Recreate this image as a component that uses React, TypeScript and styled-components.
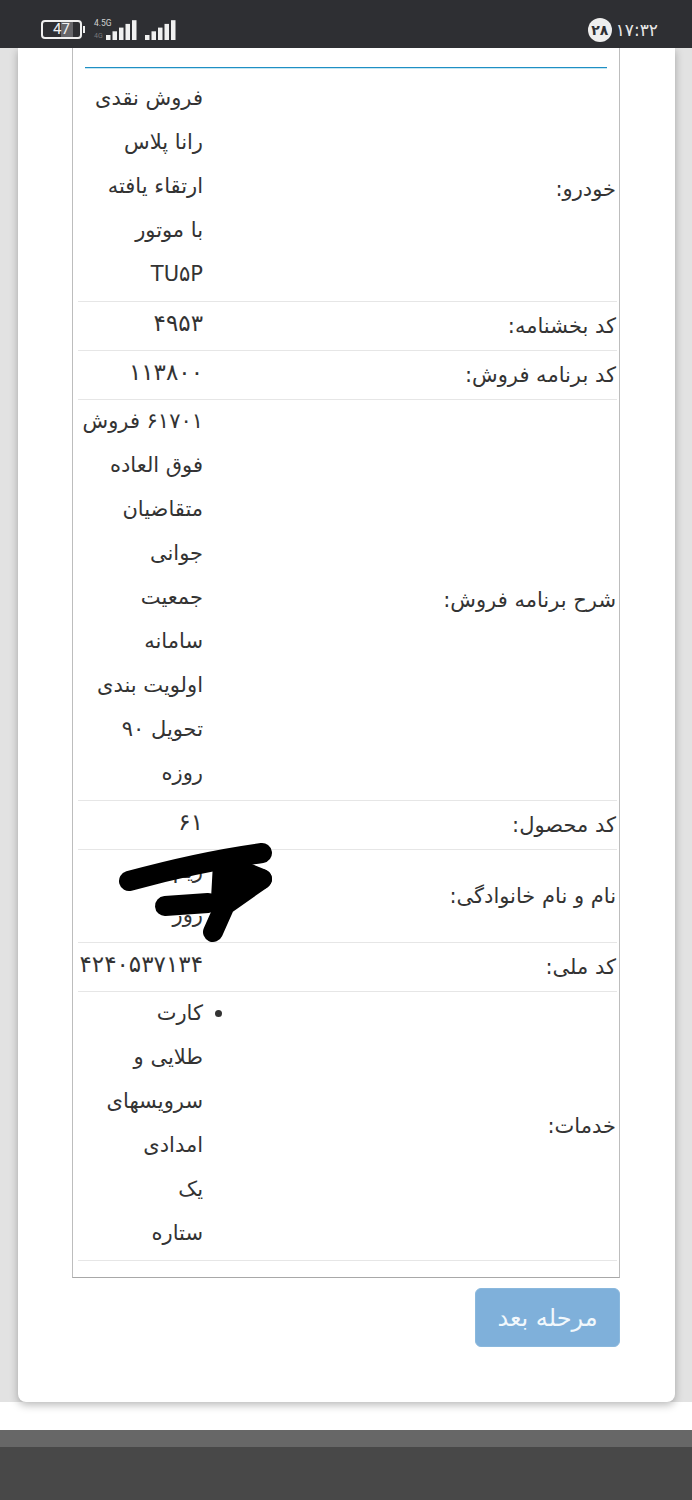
import React from "react";
import styled, { createGlobalStyle } from "styled-components";

const GlobalStyle = createGlobalStyle`
  html, body {
    margin: 0;
    padding: 0;
    background: #fff;
  }
  #root {
    width: 692px;
    height: 1500px;
    overflow: hidden;
  }
`

const Page = styled.div`
  position: relative;
  width: 692px;
  height: 1500px;
  overflow: hidden;
  display: flex;
  flex-direction: column;
  font-family: "DejaVu Sans", "Noto Sans", sans-serif;
  color: #333;
`

/* status bar */
const StatusBar = styled.div`
  flex: none;
  position: relative;
  z-index: 2;
  height: 48px;
  background: #2e2f33;
  display: flex;
  align-items: flex-end;
  justify-content: space-between;
  padding: 0 34px 8px 41px;
  box-sizing: border-box;
`

const StatusLeft = styled.div`
  display: flex;
  align-items: flex-end;
`

const Battery = styled.div`
  width: 41px;
  height: 19px;
  border: 2px solid #f0f0f0;
  border-radius: 4px;
  box-sizing: border-box;
  margin-bottom: 1px;
  background: linear-gradient(90deg, #2e2f33 0 50%, #66666a 50% 80%, #2e2f33 80%);
  color: #f0f0f0;
  font-family: "Roboto", sans-serif;
  font-size: 15px;
  line-height: 15px;
  text-align: center;
`

const BatteryTip = styled.div`
  width: 2px;
  height: 7px;
  background: #f0f0f0;
  margin: 0 0 7px 1px;
`

const NetworkLabel = styled.div`
  width: 20px;
  display: flex;
  flex-direction: column;
  margin-left: 9px;
  margin-right: -8px;
  font-family: "Roboto", sans-serif;
  color: #d0d0d0;
  font-size: 8.5px;
  line-height: 9px;
  gap: 5px;
  padding-bottom: 1px;
`

const FourG = styled.span`
  color: #77777a;
  font-size: 7px;
  line-height: 6px;
`

const StatusRight = styled.div`
  display: flex;
  align-items: center;
  gap: 4px;
  margin-bottom: -2px;
`

const DayBadge = styled.div`
  width: 24px;
  height: 24px;
  border-radius: 50%;
  background: #eee;
  color: #2e2f33;
  font-size: 14px;
  font-weight: 700;
  display: flex;
  align-items: center;
  justify-content: center;
`

const Clock = styled.div`
  color: #e8e8e8;
  font-size: 17px;
  letter-spacing: 1px;
  direction: ltr;
`

const Content = styled.div`
  flex: none;
  position: relative;
  z-index: 1;
  height: 1354px;
  background: #e2e2e2;
  padding: 0 17px 0 18px;
  box-sizing: border-box;
`

const Card = styled.div`
  height: 1354px;
  background: #fff;
  border-radius: 0 0 8px 8px;
  box-shadow: 0 3px 8px rgba(0, 0, 0, 0.28);
  padding: 0 55px 0 54px;
  box-sizing: border-box;
`

const InfoBox = styled.div`
  position: relative;
  height: 1230px;
  border: 1px solid #bdbdbd;
  border-top: 0;
  border-bottom-color: #a8a8a8;
  box-sizing: border-box;
  padding: 19px 2px 0 5px;
`

const TopRule = styled.div`
  height: 1px;
  margin: 0 10px 9px 7px;
  background: #1f8fc4;
  box-shadow: 0 1px 0 #c5e6f2;
`

const Row = styled.div`
  display: grid;
  grid-template-columns: 1fr 125px;
  direction: rtl;
  border-bottom: 1px solid #e6e6e6;
`

const Label = styled.div`
  display: flex;
  align-items: center;
  padding-right: 1px;
  font-size: 21px;
  color: #333;
  white-space: nowrap;
`

const Value = styled.div`
  padding-bottom: 4px;
  font-size: 21px;
  color: #333;
  white-space: nowrap;
`

const Line = styled.div`
  height: 44px;
  line-height: 42px;
`

const NumberLine = styled(Line)`
  font-size: 23px;
`

const ServiceItem = styled.div`
  position: relative;
`

const Bullet = styled.span`
  position: absolute;
  top: 18px;
  right: -19px;
  width: 7px;
  height: 7px;
  border-radius: 50%;
  background: #333;
`

const Scribble = styled.svg`
  position: absolute;
  left: 40px;
  top: 791px;
  width: 170px;
  height: 110px;
`

const Actions = styled.div`
  display: flex;
  justify-content: flex-end;
  margin-top: 10px;
`

const NextButton = styled.button`
  width: 145px;
  height: 59px;
  border: 1px solid #8ab8dd;
  border-radius: 6px;
  background: #7fb0da;
  color: #f2f8fc;
  font-family: "DejaVu Sans", "Noto Sans", sans-serif;
  font-size: 24px;
  padding: 0;
`

const WhiteBand = styled.div`
  flex: none;
  height: 28px;
  background: #fff;
`

const FooterTop = styled.div`
  flex: none;
  height: 17px;
  background: #676767;
`

const Footer = styled.div`
  flex: 1;
  background: #484848;
`

const Bars = ({ gap }: { gap: number }) => (
  <svg width="31" height="20" viewBox="0 0 31 20" style={{ marginLeft: gap }}>
    {[0, 6.5, 13, 19.5, 26].map((x, i) => (
      <rect key={x} x={x} y={15 - i * 3.7} width="4.5" height={5 + i * 3.7} fill="#f0f0f0" />
    ))}
  </svg>
)

const rows = [
  { label: "خودرو:", lines: ["فروش نقدی", "رانا پلاس", "ارتقاء یافته", "با موتور", "TU۵P"] },
  { label: "کد بخشنامه:", lines: ["۴۹۵۳"], numeric: true },
  { label: "کد برنامه فروش:", lines: ["۱۱۳۸۰۰"], numeric: true },
  {
    label: "شرح برنامه فروش:",
    lines: ["۶۱۷۰۱ فروش", "فوق العاده", "متقاضیان", "جوانی", "جمعیت", "سامانه", "اولویت بندی", "تحویل ۹۰", "روزه"],
  },
  { label: "کد محصول:", lines: ["۶۱"], numeric: true },
  { label: "نام و نام خانوادگی:", lines: ["ریم", "رور"] },
  { label: "کد ملی:", lines: ["۴۲۴۰۵۳۷۱۳۴"], numeric: true },
]

const services = ["کارت", "طلایی و", "سرویسهای", "امدادی", "یک", "ستاره"]

export default function App() {
  return (
    <Page>
      <GlobalStyle />
      <StatusBar>
        <StatusLeft>
          <Battery>47</Battery>
          <BatteryTip />
          <NetworkLabel>
            <span>4.5G</span>
            <FourG>4G</FourG>
          </NetworkLabel>
          <Bars gap={0} />
          <Bars gap={8} />
        </StatusLeft>
        <StatusRight>
          <DayBadge>۲۸</DayBadge>
          <Clock>۱۷:۳۲</Clock>
        </StatusRight>
      </StatusBar>
      <Content>
        <Card>
          <InfoBox>
            <TopRule />
            {rows.map((row) => (
              <Row key={row.label}>
                <Label>{row.label}</Label>
                <Value>
                  {row.lines.map((line) =>
                    row.numeric ? <NumberLine key={line}>{line}</NumberLine> : <Line key={line}>{line}</Line>
                  )}
                </Value>
              </Row>
            ))}
            <Row>
              <Label>خدمات:</Label>
              <Value>
                {services.map((line, i) => (
                  <ServiceItem key={line}>
                    {i === 0 && <Bullet />}
                    <Line>{line}</Line>
                  </ServiceItem>
                ))}
              </Value>
            </Row>
            <Scribble viewBox="0 0 170 110">
              <g fill="#000" stroke="#000" strokeWidth="20" strokeLinecap="round" strokeLinejoin="round">
                <path fill="none" d="M16 42 C60 30 105 20 149 14" />
                <path d="M110 24 L149 40 L108 60 Z" />
                <path fill="none" d="M52 67 L95 64" />
                <path fill="none" d="M149 40 L112 66 L100 93" />
              </g>
            </Scribble>
          </InfoBox>
          <Actions>
            <NextButton>مرحله بعد</NextButton>
          </Actions>
        </Card>
      </Content>
      <WhiteBand />
      <FooterTop />
      <Footer />
    </Page>
  )
}
